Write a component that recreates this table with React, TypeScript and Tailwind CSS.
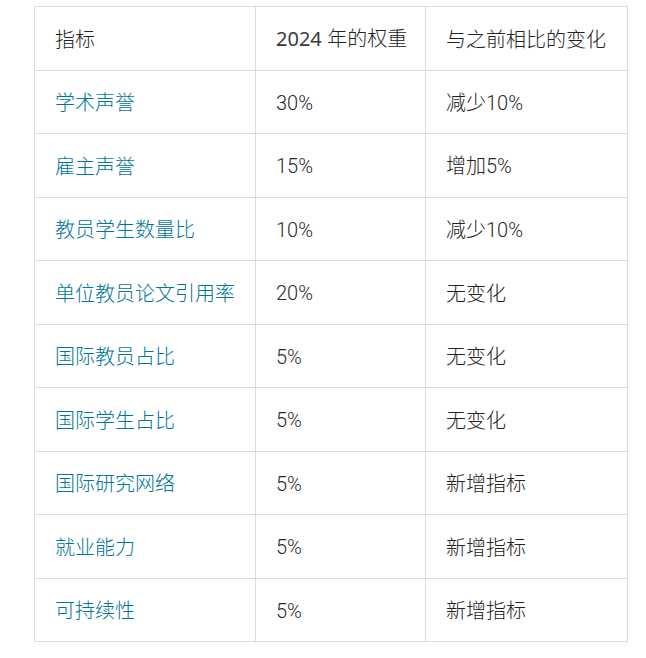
const rows = [
  ["学术声誉", "30%", "减少10%"],
  ["雇主声誉", "15%", "增加5%"],
  ["教员学生数量比", "10%", "减少10%"],
  ["单位教员论文引用率", "20%", "无变化"],
  ["国际教员占比", "5%", "无变化"],
  ["国际学生占比", "5%", "无变化"],
  ["国际研究网络", "5%", "新增指标"],
  ["就业能力", "5%", "新增指标"],
  ["可持续性", "5%", "新增指标"],
];

// digits get their own font, CJK stays light
function Txt({ s }: { s: string }) {
  const parts = s.split(/([0-9%]+)/).filter(Boolean);
  return (
    <>
      {parts.map((p, i) =>
        /^[0-9%]+$/.test(p) ? (
          <span key={i} className="font-['Roboto',sans-serif] font-light text-[#2a2a2a]">
            {p}
          </span>
        ) : (
          <span key={i}>{p}</span>
        ),
      )}
    </>
  );
}

export default function App() {
  return (
    <div className="min-h-[658px] w-[646px] bg-white pt-[6px] pl-[34px] font-['Lato','Noto_Sans_CJK_SC',sans-serif] text-[20px] font-light text-[#222]">
      <table className="w-[593px] table-fixed border-collapse border border-[#dcdcdc]">
        <colgroup>
          <col className="w-[221px]" />
          <col className="w-[170px]" />
          <col className="w-[202px]" />
        </colgroup>
        <thead>
          <tr className="h-[64px]">
            <th className="border border-[#dcdcdc] px-5 text-left font-light whitespace-nowrap">指标</th>
            <th className="border border-[#dcdcdc] px-5 text-left font-light whitespace-nowrap">
              <span className="font-['Noto_Sans','Noto_Sans_CJK_SC',sans-serif] font-normal text-[#3a3a3a]">2024</span> 年的权重
            </th>
            <th className="border border-[#dcdcdc] px-5 text-left font-light whitespace-nowrap">与之前相比的变化</th>
          </tr>
        </thead>
        <tbody>
          {rows.map((r, i) => (
            <tr key={r[0]} className={i % 2 === 0 ? "h-[63px]" : "h-[64px]"}>
              <td className="border border-[#dcdcdc] px-5 whitespace-nowrap text-[#00769a]">{r[0]}</td>
              <td className="border border-[#dcdcdc] px-5 whitespace-nowrap">
                <Txt s={r[1]} />
              </td>
              <td className="border border-[#dcdcdc] px-5 whitespace-nowrap">
                <Txt s={r[2]} />
              </td>
            </tr>
          ))}
        </tbody>
      </table>
    </div>
  );
}
